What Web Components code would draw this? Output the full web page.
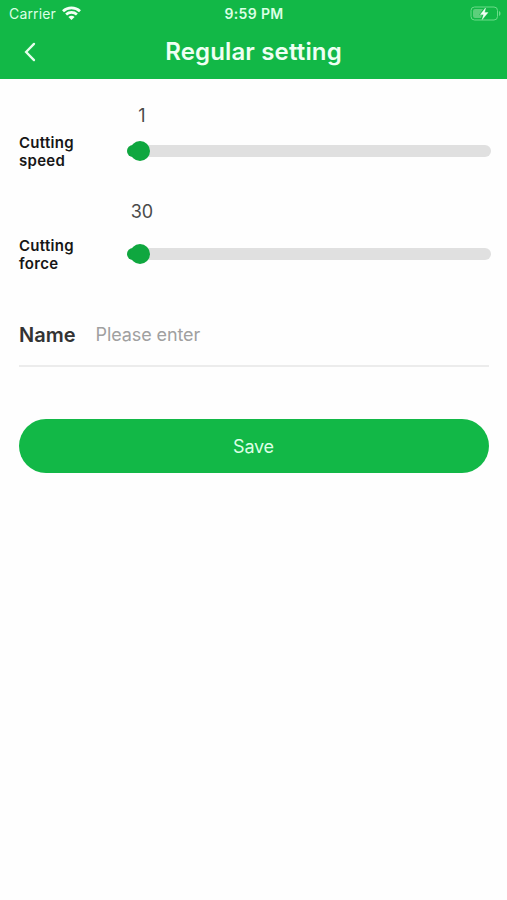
<!DOCTYPE html>
<html lang="en">
<head>
<meta charset="utf-8">
<title>Regular setting</title>
<style>
html, body { margin: 0; background: #fefefe; }
body { font-family: Inter, "Liberation Sans", sans-serif; --green: #12b847; --thumb: #0fa73f; }
</style>
</head>
<body>
<settings-page></settings-page>
<script>
const define = (name, html) => customElements.define(name, class extends HTMLElement {
  constructor() {
    super();
    const t = document.createElement('template');
    t.innerHTML = html;
    this.attachShadow({ mode: 'open' }).append(t.content.cloneNode(true));
  }
});

define('status-bar', `
<style>
:host { display: grid; grid-template-columns: 1fr auto 1fr; align-items: center; height: 28px; padding: 0 6px 0 9px; box-sizing: border-box; color: #dcffe5; }
.left { display: flex; align-items: center; gap: 6px; }
.carrier { font-size: 14px; line-height: 18px; letter-spacing: .15px; }
.time { font-size: 14px; font-weight: 600; line-height: 18px; letter-spacing: .35px; margin-left: -2px; }
.battery { justify-self: end; margin-top: -1px; }
svg { display: block; }
.wifi { margin-top: -2px; }
</style>
<div class="left"><span class="carrier">Carrier</span>
<svg class="wifi" width="19" height="14" viewBox="0 0 19 14" fill="none" stroke="#f2fff5" stroke-width="2.700"><path d="M1 5.2C5.7.7 13.300.7 18 5.2M4.1 8.4c3-2.800 7.800-2.800 10.800 0"/><path d="M9.5 14 6.4 10.900c1.700-1.500 4.500-1.500 6.200 0z" fill="#f2fff5" stroke="none"/></svg></div>
<span class="time">9:59 PM</span>
<svg class="battery" width="31" height="15" viewBox="0 0 31 15"><rect x="1" y="1" width="26.5" height="13" rx="3.5" fill="none" stroke="#6bdc89" stroke-width="1"/><path d="M3 5a2 2 0 0 1 2-2h8l-4 6h3l-1 3H5a2 2 0 0 1-2-2z" fill="#5ccf7b"/><path d="M29 5v5c2-.8 2-4.200 0-5z" fill="#6bdc89"/><path d="m15.500 2-5.200 6.500h3.300L12.200 13.500 18 6.600h-3.400z" fill="#f2fff5" stroke="#f2fff5" stroke-width=".4"/></svg>`);

define('nav-bar', `
<style>
:host { display: grid; grid-template-columns: 61px 1fr 61px; align-items: center; height: 51px; padding-bottom: 4px; box-sizing: border-box; color: #effff3; }
svg { display: block; margin: 0 0 0 24px; }
.title { text-align: center; font-size: 24px; font-weight: 600; line-height: 30px; letter-spacing: .15px; }
</style>
<svg width="13" height="20" viewBox="0 0 13 20" fill="none" stroke="#e6ffed" stroke-width="2.300" stroke-linecap="round"><path d="M10 1.900 2.100 10l7.900 8.100"/></svg>
<span class="title"><slot></slot></span>`);

define('slider-row', `
<style>
:host { display: grid; grid-template-columns: 108px 364px; grid-template-rows: 24px auto; }
.value { grid-column: 2; width: 30px; text-align: center; font-size: 18px; line-height: 26px; color: #4a4a4a; }
.label { width: 76px; font-size: 15px; font-weight: 600; line-height: 18px; letter-spacing: .3px; color: #161616; margin-top: var(--label-gap); }
.track { align-self: start; display: flex; align-items: center; height: 12px; border-radius: 6px; background: #e0e0e0; margin-top: var(--track-gap); }
.fill { width: 12px; height: 12px; border-radius: 6px 0 0 6px; background: var(--thumb); }
.thumb { width: 20px; height: 20px; border-radius: 50%; background: var(--thumb); margin-left: -9px; }
</style>
<span class="value"><slot name="value"></slot></span>
<span class="label"><slot></slot></span>
<div class="track"><div class="fill"></div><div class="thumb"></div></div>`);

define('name-field', `
<style>
:host { display: flex; align-items: center; height: 60px; border-bottom: 2px solid #ececec; gap: 20px; }
.label { font-size: 20px; font-weight: 600; line-height: 26px; color: #333; }
.hint { font-size: 18px; line-height: 26px; letter-spacing: -.1px; color: #a0a0a0; }
</style>
<span class="label"><slot></slot></span><span class="hint"><slot name="hint"></slot></span>`);

define('save-button', `
<style>
:host { display: flex; align-items: center; justify-content: center; height: 54px; border-radius: 27px; background: var(--green); color: #dcffe5; font-size: 18px; letter-spacing: -.2px; padding-right: 1px; box-sizing: border-box; }
</style>
<slot></slot>`);

define('settings-page', `
<style>
:host { display: block; min-height: 900px; }
header { background: var(--green); height: 79px; }
main { padding: 24px 18px 0 19px; display: flex; flex-direction: column; }
slider-row.speed { --label-gap: 7px; --track-gap: 18px; height: 96px; }
slider-row.force { --label-gap: 14px; --track-gap: 25px; height: 106px; }
save-button { margin-top: 52px; }
</style>
<header><status-bar></status-bar><nav-bar>Regular setting</nav-bar></header>
<main>
<slider-row class="speed"><span slot="value">1</span>Cutting speed</slider-row>
<slider-row class="force"><span slot="value">30</span>Cutting force</slider-row>
<name-field>Name<span slot="hint">Please enter</span></name-field>
<save-button>Save</save-button>
</main>`);
</script>
</body>
</html>
